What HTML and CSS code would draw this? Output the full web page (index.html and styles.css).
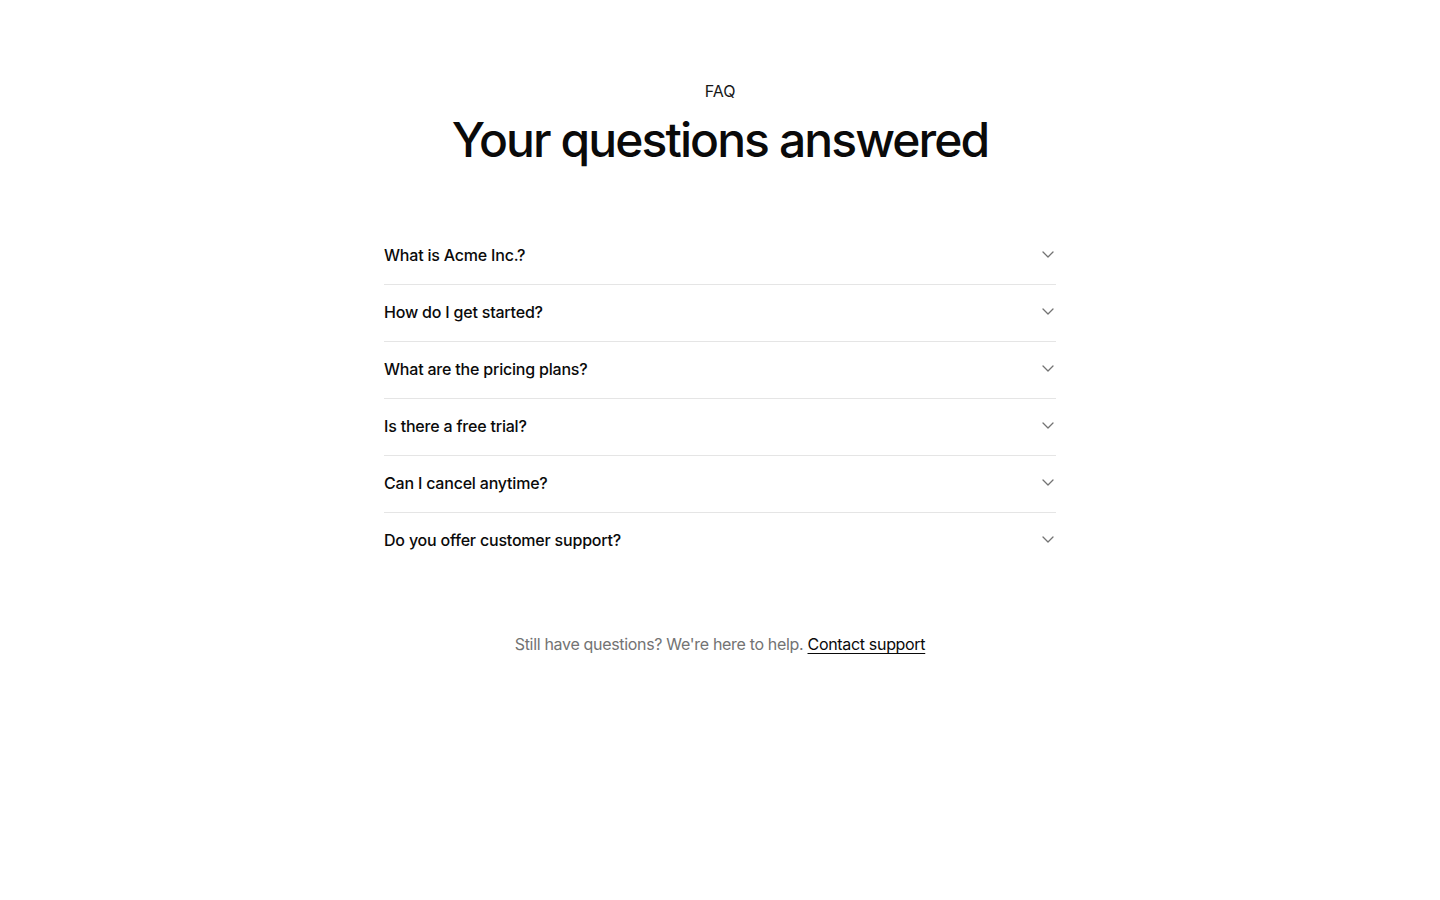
FILE: index.html
```html
<!DOCTYPE html>
<html lang="en">
<head>
    <meta charset="UTF-8">
    <meta name="viewport" content="width=device-width, initial-scale=1.0">
    <title>FAQ</title>
    <link rel="stylesheet" href="styles.css">
</head>
<body>

    <section class="faq">
        <p class="eyebrow">FAQ</p>
        <h1>Your questions answered</h1>

        <div class="accordion">
            <div class="item">
                <button class="trigger">
                    <span>What is Acme Inc.?</span>
                    <svg class="chevron" viewBox="0 0 16 16"><path d="M3 6l5 5 5-5"/></svg>
                </button>
            </div>
            <div class="item">
                <button class="trigger">
                    <span>How do I get started?</span>
                    <svg class="chevron" viewBox="0 0 16 16"><path d="M3 6l5 5 5-5"/></svg>
                </button>
            </div>
            <div class="item">
                <button class="trigger">
                    <span>What are the pricing plans?</span>
                    <svg class="chevron" viewBox="0 0 16 16"><path d="M3 6l5 5 5-5"/></svg>
                </button>
            </div>
            <div class="item">
                <button class="trigger">
                    <span>Is there a free trial?</span>
                    <svg class="chevron" viewBox="0 0 16 16"><path d="M3 6l5 5 5-5"/></svg>
                </button>
            </div>
            <div class="item">
                <button class="trigger">
                    <span>Can I cancel anytime?</span>
                    <svg class="chevron" viewBox="0 0 16 16"><path d="M3 6l5 5 5-5"/></svg>
                </button>
            </div>
            <div class="item">
                <button class="trigger">
                    <span>Do you offer customer support?</span>
                    <svg class="chevron" viewBox="0 0 16 16"><path d="M3 6l5 5 5-5"/></svg>
                </button>
            </div>
        </div>

        <p class="footnote">Still have questions? We're here to help. <a href="#">Contact support</a></p>
    </section>

</body>
</html>
```

FILE: styles.css
```css
body {
    margin: 0;
    font-family: Inter, "Noto Sans", sans-serif;
    color: #0a0a0a;
    background: #fff;
}
.faq {
    max-width: 672px;
    margin: 0 auto;
    padding-top: 79px;
    text-align: center;
}
.eyebrow {
    margin: 0;
    font-size: 16px;
    line-height: 24px;
    font-weight: 400;
    color: #171717;
}
.faq h1 {
    margin: 10px 0 0;
    font-size: 48px;
    line-height: 54px;
    font-weight: 500;
    letter-spacing: -0.04em;
}
.accordion {
    margin-top: 61px;
    text-align: left;
}
.item {
    border-bottom: 1px solid #e5e5e5;
}
.item:last-child {
    border-bottom: none;
}
.trigger {
    display: flex;
    align-items: center;
    justify-content: space-between;
    box-sizing: border-box;
    width: 100%;
    height: 56px;
    padding: 0 0 2px;
    border: none;
    background: none;
    font: inherit;
    font-size: 16px;
    font-weight: 500;
    letter-spacing: -0.0125em;
    color: #0a0a0a;
    cursor: pointer;
}
.chevron {
    width: 16px;
    height: 16px;
    margin-top: -3px;
    fill: none;
    stroke: #737373;
    stroke-width: 1.3;
    stroke-linecap: round;
    stroke-linejoin: round;
}
.footnote {
    margin: 63px 0 0;
    font-size: 16px;
    line-height: 24px;
    letter-spacing: -0.02em;
    color: #737373;
}
.footnote a {
    color: #0a0a0a;
    text-underline-offset: 3px;
}
```
